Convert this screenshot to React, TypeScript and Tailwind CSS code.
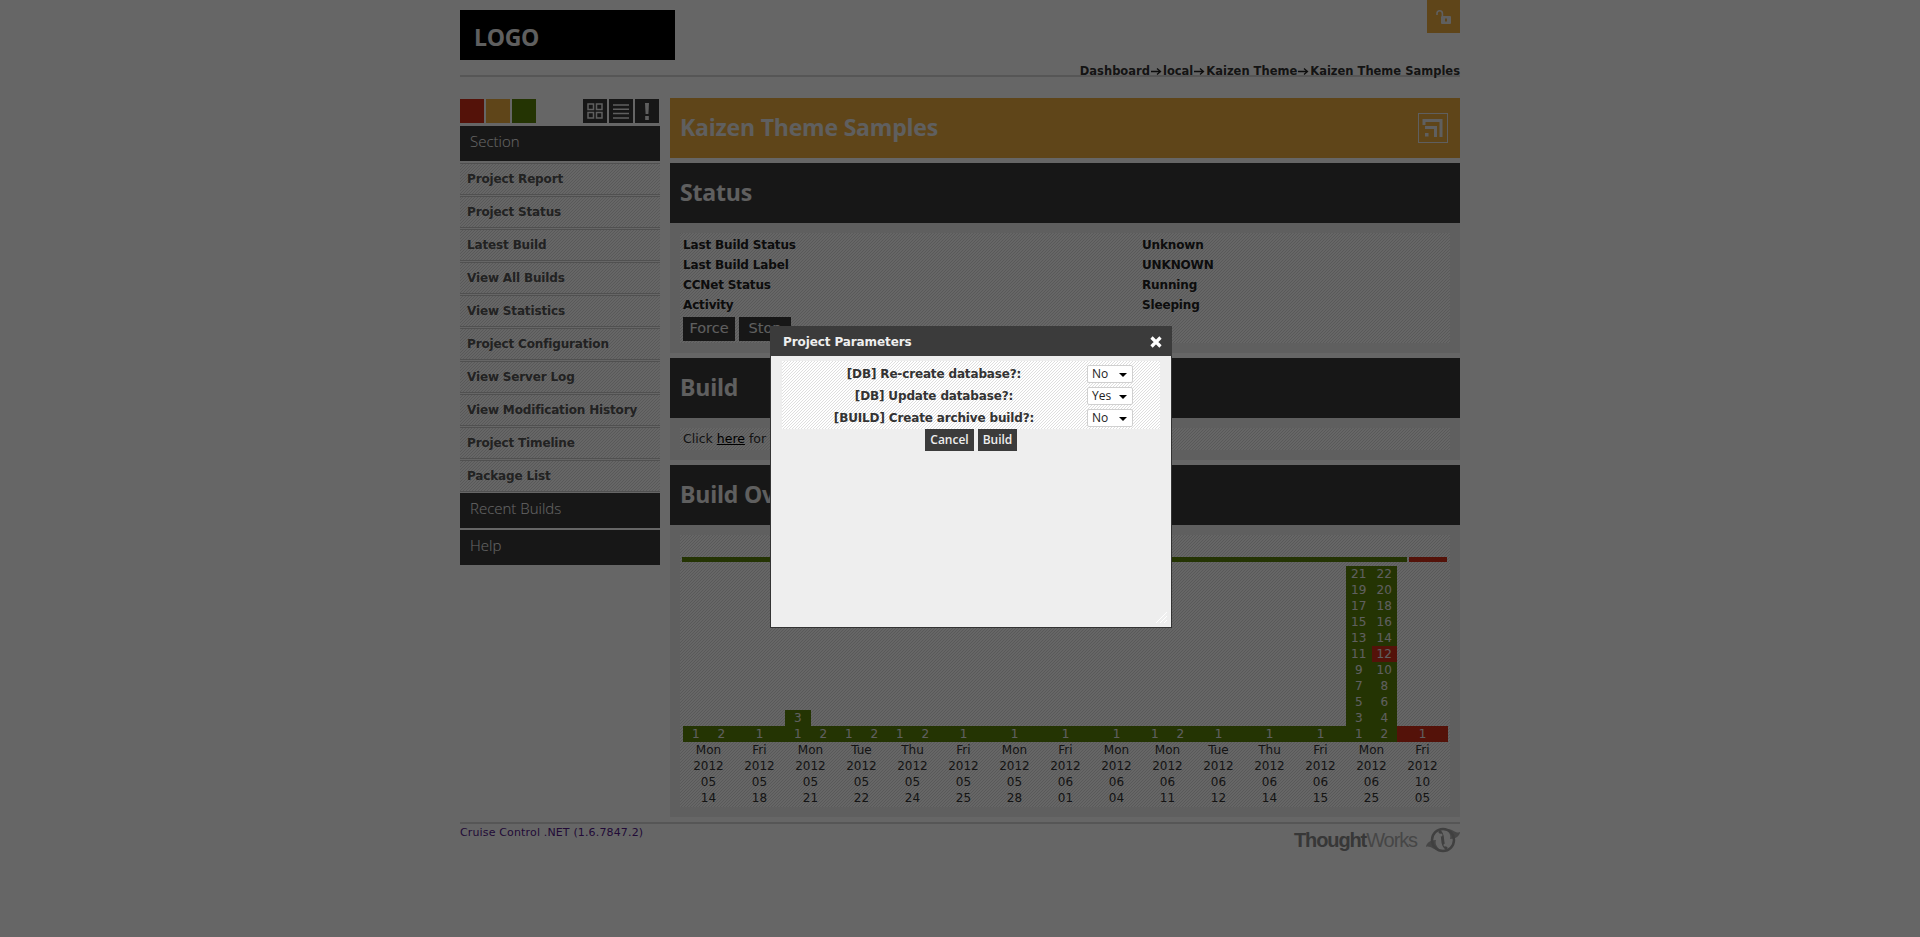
import React from 'react';

const hatch = 'bg-[repeating-linear-gradient(135deg,#dedede_0,#dedede_0.7071px,#ffffff_0.7071px,#ffffff_2.1213px)]';
const navItems = [
  'Project Report',
  'Project Status',
  'Latest Build',
  'View All Builds',
  'View Statistics',
  'Project Configuration',
  'View Server Log',
  'View Modification History',
  'Project Timeline',
  'Package List',
];

type Build = { day: string; month: string; date: string; counts: [string, string?][]; red?: string[] };

const builds: Build[] = [
  { day: 'Mon', month: '05', date: '14', counts: [['1', '2']] },
  { day: 'Fri', month: '05', date: '18', counts: [['1']] },
  { day: 'Mon', month: '05', date: '21', counts: [['3', ''], ['1', '2']] },
  { day: 'Tue', month: '05', date: '22', counts: [['1', '2']] },
  { day: 'Thu', month: '05', date: '24', counts: [['1', '2']] },
  { day: 'Fri', month: '05', date: '25', counts: [['1']] },
  { day: 'Mon', month: '05', date: '28', counts: [['1']] },
  { day: 'Fri', month: '06', date: '01', counts: [['1']] },
  { day: 'Mon', month: '06', date: '04', counts: [['1']] },
  { day: 'Mon', month: '06', date: '11', counts: [['1', '2']] },
  { day: 'Tue', month: '06', date: '12', counts: [['1']] },
  { day: 'Thu', month: '06', date: '14', counts: [['1']] },
  { day: 'Fri', month: '06', date: '15', counts: [['1']] },
  {
    day: 'Mon',
    month: '06',
    date: '25',
    red: ['12'],
    counts: [
      ['21', '22'],
      ['19', '20'],
      ['17', '18'],
      ['15', '16'],
      ['13', '14'],
      ['11', '12'],
      ['9', '10'],
      ['7', '8'],
      ['5', '6'],
      ['3', '4'],
      ['1', '2'],
    ],
  },
  { day: 'Fri', month: '10', date: '05', red: ['1'], counts: [['1']] },
];

const params = [
  { label: '[DB] Re-create database?:', value: 'No' },
  { label: '[DB] Update database?:', value: 'Yes' },
  { label: '[BUILD] Create archive build?:', value: 'No' },
];

const heading = "font-['Open_Sans',sans-serif] font-bold tracking-[-0.2px] text-[#eeeeee]";

const BuildColumn: React.FC<{ build: Build }> = ({ build }) => {
  const isRed = (n?: string) => !!n && !!build.red?.includes(n);
  return (
    <div className="w-[51px] flex flex-col justify-end">
      {build.counts.map((row, i) => (
        <div key={i} className="flex h-4 leading-4 text-center text-[#eeeeee]">
          {row.length === 1 ? (
            <div className={`w-full ${isRed(row[0]) ? 'bg-[#d22d17]' : 'bg-[#5a8208]'}`}>{row[0]}</div>
          ) : (
            <>
              <div className={`w-1/2 ${isRed(row[0]) ? 'bg-[#d22d17]' : 'bg-[#5a8208]'}`}>{row[0]}</div>
              {row[1] !== '' && (
                <div className={`w-1/2 ${isRed(row[1]) ? 'bg-[#d22d17]' : 'bg-[#5a8208]'}`}>{row[1]}</div>
              )}
            </>
          )}
        </div>
      ))}
      <div className="h-16 text-center leading-4 text-[#333]">
        <div>{build.day}</div>
        <div>2012</div>
        <div>{build.month}</div>
        <div>{build.date}</div>
      </div>
    </div>
  );
};

const SideHeader: React.FC<{ title: string }> = ({ title }) => (
  <div className="h-[35px] bg-[#3b3b3b] pl-[10px] pt-[4px] font-['Open_Sans',sans-serif] font-light text-[15px] leading-[22px] text-[#ffffff]">
    {title}
  </div>
);

const SectionHeader: React.FC<{ title: string }> = ({ title }) => (
  <div className={`h-[60px] bg-[#3b3b3b] pl-[10px] pb-[2px] flex items-center text-[23px] ${heading}`}>{title}</div>
);

const App: React.FC = () => {
  return (
    <div className="relative min-h-screen h-[937px] overflow-hidden bg-white font-['DejaVu_Sans',sans-serif] text-[12px] text-[#333]">
      <div className="w-[1000px] mx-auto">
        <header className="relative h-[77px] border-b-2 border-[#d8d8d8]">
          <div className="absolute left-0 top-[10px] w-[215px] h-[50px] bg-black pl-[14px] pt-[11px] font-['Open_Sans',sans-serif] font-bold text-[23px] leading-[32px] tracking-[-0.3px] text-[#eeeeee]">
            LOGO
          </div>
          <div className="absolute right-0 top-0 w-[33px] h-[33px] bg-[#eeac3f] flex items-center justify-center">
            <svg width="18" height="16" viewBox="0 0 18 16" fill="none">
              <path d="M2 6V4.5A2.7 2.7 0 0 1 7.4 4.5V7" stroke="#eeeeee" strokeWidth="1.6" />
              <rect x="6" y="7" width="10" height="8" rx="1" fill="#eeeeee" />
              <rect x="10" y="9.5" width="2" height="3" fill="#eeac3f" />
            </svg>
          </div>
          <nav className="absolute right-0 top-[63px] flex items-center font-bold text-[11.5px] leading-4 text-[#333] whitespace-nowrap">
            {['Dashboard', 'local', 'Kaizen Theme', 'Kaizen Theme Samples'].map((item, i) => (
              <React.Fragment key={item}>
                {i > 0 && (
                  <svg width="11" height="9" viewBox="0 0 11 9" className="mx-px">
                    <path d="M0 4.5H9M6 1.5L9.5 4.5L6 7.5" stroke="#222" strokeWidth="1.3" fill="none" />
                  </svg>
                )}
                <span>{item}</span>
              </React.Fragment>
            ))}
          </nav>
        </header>

        <div className="flex gap-[10px] pt-[21px]">
          <aside className="w-[200px] shrink-0">
            <div className="flex justify-between h-[24px] mt-[1px] pr-px">
              <div className="flex gap-[2px]">
                <div className="w-6 bg-[#d22d17]" />
                <div className="w-6 bg-[#eeac3f]" />
                <div className="w-6 bg-[#5a8208]" />
              </div>
              <div className="flex gap-[2px]">
                <div className="w-6 bg-[#3b3b3b] flex items-center justify-center">
                  <svg width="16" height="16" viewBox="0 0 16 16" fill="none" stroke="#eeeeee" strokeWidth="1.5">
                    <rect x="1" y="1" width="5.5" height="5.5" />
                    <rect x="9.5" y="1" width="5.5" height="5.5" />
                    <rect x="1" y="9.5" width="5.5" height="5.5" />
                    <rect x="9.5" y="9.5" width="5.5" height="5.5" />
                  </svg>
                </div>
                <div className="w-6 bg-[#3b3b3b] flex items-center justify-center">
                  <svg width="16" height="15" viewBox="0 0 16 15" stroke="#eeeeee" strokeWidth="1.5">
                    <path d="M0 1H16M0 5.3H16M0 9.6H16M0 14H16" />
                  </svg>
                </div>
                <div className="w-6 bg-[#3b3b3b] flex items-center justify-center">
                  <svg width="6" height="17" viewBox="0 0 6 17" fill="#eeeeee">
                    <path d="M1 0H5L4.4 11H1.6Z" />
                    <rect x="1.2" y="13" width="3.6" height="4" />
                  </svg>
                </div>
              </div>
            </div>
            <div className="mt-[3px]">
              <SideHeader title="Section" />
            </div>
            <div className="pt-[2px]">
              {navItems.map((item) => (
                <div
                  key={item}
                  className={`h-[32px] mb-px border-t border-b border-[#c8c8c8] pl-[7px] flex items-center font-bold text-[12px] tracking-[-0.15px] text-[#555] ${hatch}`}
                >
                  {item}
                </div>
              ))}
            </div>
            <div className="flex flex-col gap-[2px]">
              <SideHeader title="Recent Builds" />
              <SideHeader title="Help" />
            </div>
          </aside>

          <main className="w-[790px]">
            <div className={`h-[60px] bg-[#eeac3f] pl-[10px] pr-[12px] pb-[2px] flex items-center justify-between text-[23px] ${heading}`}>
              <span>Kaizen Theme Samples</span>
              <svg width="30" height="30" viewBox="0 0 30 30" fill="none" stroke="#eeeeee" className="mt-[2px]">
                <rect x="0.5" y="0.5" width="29" height="29" />
                <path d="M6 12V7.5H23V24" strokeWidth="3" />
                <path d="M7 14.5H17.5V24" strokeWidth="3" />
                <rect x="7" y="20" width="3.5" height="3.5" fill="#eeeeee" stroke="none" />
              </svg>
            </div>

            <div className="mt-[5px]">
              <SectionHeader title="Status" />
              <div className="bg-[#eeeeee] p-[10px]">
                <div className={`h-[110px] px-[3px] pt-[2px] font-bold text-[12px] tracking-[-0.15px] text-[#222] ${hatch}`}>
                  {[
                    ['Last Build Status', 'Unknown'],
                    ['Last Build Label', 'UNKNOWN'],
                    ['CCNet Status', 'Running'],
                    ['Activity', 'Sleeping'],
                  ].map(([k, v]) => (
                    <div key={k} className="flex h-5 items-center">
                      <div className="w-[459px]">{k}</div>
                      <div>{v}</div>
                    </div>
                  ))}
                  <div className="flex gap-[4px] pt-[2px]">
                    <div className="w-[52px] h-6 bg-[#3b3b3b] flex items-center justify-center font-normal tracking-normal text-[14.5px] text-[#eeeeee]">Force</div>
                    <div className="w-[52px] h-6 bg-[#3b3b3b] flex items-center justify-center font-normal tracking-normal text-[14.5px] text-[#eeeeee]">Stop</div>
                  </div>
                </div>
              </div>
            </div>

            <div className="mt-[5px]">
              <SectionHeader title="Build" />
              <div className="bg-[#eeeeee] px-[10px] py-[10px]">
                <div className={`h-[22px] px-[3px] flex items-center text-[12.5px] text-[#333] ${hatch}`}>
                  <span>
                    Click <a className="underline text-black">here</a> for the build report
                  </span>
                </div>
              </div>
            </div>

            <div className="mt-[5px]">
              <SectionHeader title="Build Overview" />
              <div className="bg-[#eeeeee] p-[10px]">
                <div className={`h-[272px] pl-[3px] pt-[22px] ${hatch}`}>
                  <div className="flex gap-[2px] h-[5px] pr-[2px]">
                    <div className="w-[725px] -ml-[1px] bg-[#5a8208]" />
                    <div className="w-[38px] bg-[#d22d17]" />
                  </div>
                  <div className="flex h-[240px] mt-[4px]">
                    {builds.map((b) => (
                      <BuildColumn key={b.month + b.date} build={b} />
                    ))}
                  </div>
                </div>
              </div>
            </div>
          </main>
        </div>

        <footer className="relative mt-[5px] h-[40px] border-t-2 border-[#d8d8d8] pt-[1px] text-[11px] leading-4 tracking-[0.15px] text-[#551a8b]">
          Cruise Control .NET (1.6.7847.2)
          <div className="absolute right-0 top-[3px] flex items-center gap-[9px]">
            <span className="font-['Liberation_Sans',sans-serif] text-[20px] leading-6 tracking-[-1.1px] text-[#b0b0b0]">
              <span className="font-bold text-[#8a8a8a]">Thought</span>Works
            </span>
            <svg width="34" height="26" viewBox="0 0 34 26" fill="#b0b0b0">
              <path d="M10 13C2 13 0 18 0 20C4 18 8 24 14 23C10 19 9 16 10 13Z" />
              <path d="M24 12C32 12 34 7 34 5C30 7 26 1 20 2C24 6 25 9 24 12Z" />
              <circle cx="17" cy="13" r="11" fill="none" stroke="#a0a0a0" strokeWidth="2.5" />
              <path d="M13 4C20 8 13 17 21 22" fill="none" stroke="#a0a0a0" strokeWidth="3" />
              <circle cx="15" cy="8" r="1.5" fill="#ffffff" />
              <circle cx="19" cy="18" r="1.5" fill="#ffffff" />
            </svg>
          </div>
        </footer>
      </div>

      <div className="absolute inset-0 bg-black/60" />

      <div className="absolute left-[770px] top-[326px] w-[402px] h-[302px] bg-[#eeeeee] border border-[#333] border-t-0 flex flex-col">
        <div className="h-[30px] -mx-px bg-[#3b3b3b] pl-[13px] pr-[10px] pt-px flex items-center justify-between font-bold text-[12px] tracking-[-0.1px] text-[#eeeeee]">
          <span>Project Parameters</span>
          <svg width="12" height="12" viewBox="0 0 12 12" stroke="#ffffff" strokeWidth="3.2">
            <path d="M1.5 1.5L10.5 10.5M10.5 1.5L1.5 10.5" />
          </svg>
        </div>
        <div className={`mt-[5px] mx-[11px] h-[68px] ${hatch} py-[2px]`}>
          {params.map((p) => (
            <div key={p.label} className="flex h-[22px] items-center">
              <div className="w-[304px] text-center font-bold text-[12px] tracking-[-0.15px] text-[#333]">{p.label}</div>
              <div className="ml-px w-[46px] h-[18px] bg-white border border-[#d0d0d0] rounded-[2px] flex items-center justify-between pl-[4px] pr-[5px] font-['Open_Sans',sans-serif] text-[12px] text-[#222]">
                <span>{p.value}</span>
                <span className="w-0 h-0 border-x-[4px] border-x-transparent border-t-[4px] border-t-black mt-[2px]" />
              </div>
            </div>
          ))}
        </div>
        <div className="flex justify-center gap-[4px]">
          <div className="w-[49px] h-[22px] bg-[#3b3b3b] flex items-center justify-center font-['Open_Sans',sans-serif] font-semibold text-[12px] text-[#eeeeee]">Cancel</div>
          <div className="w-[39px] h-[22px] bg-[#3b3b3b] flex items-center justify-center font-['Open_Sans',sans-serif] font-semibold text-[12px] text-[#eeeeee]">Build</div>
        </div>
        <svg width="12" height="12" viewBox="0 0 12 12" stroke="#ffffff" className="absolute right-[3px] bottom-[3px]">
          <path d="M0 11L11 0M4 11L11 4M8 11L11 8" />
        </svg>
      </div>
    </div>
  );
};

export default App;
